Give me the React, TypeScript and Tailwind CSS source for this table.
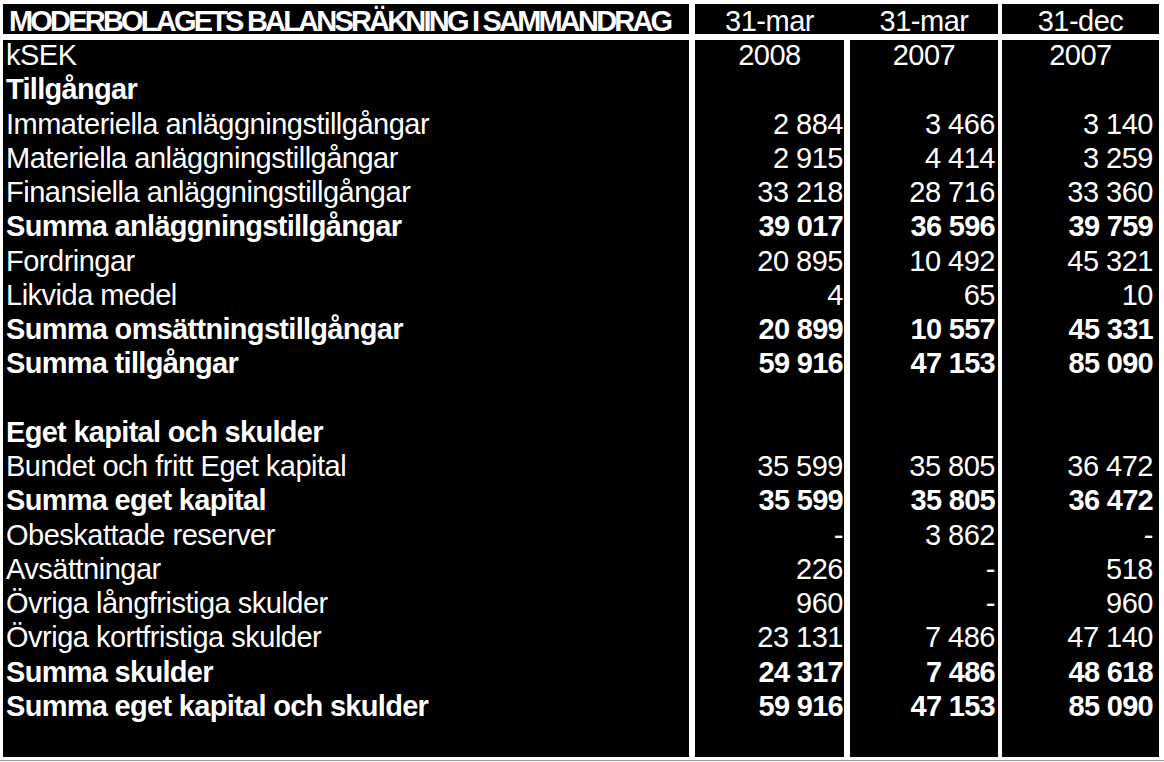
import React from 'react';

type Row = {
  label: string;
  bold?: boolean;
  values?: [string, string, string];
  center?: boolean;
};

const rows: Row[] = [
  { label: 'kSEK', values: ['2008', '2007', '2007'], center: true },
  { label: 'Tillgångar', bold: true },
  { label: 'Immateriella anläggningstillgångar', values: ['2 884', '3 466', '3 140'] },
  { label: 'Materiella anläggningstillgångar', values: ['2 915', '4 414', '3 259'] },
  { label: 'Finansiella anläggningstillgångar', values: ['33 218', '28 716', '33 360'] },
  { label: 'Summa anläggningstillgångar', bold: true, values: ['39 017', '36 596', '39 759'] },
  { label: 'Fordringar', values: ['20 895', '10 492', '45 321'] },
  { label: 'Likvida medel', values: ['4', '65', '10'] },
  { label: 'Summa omsättningstillgångar', bold: true, values: ['20 899', '10 557', '45 331'] },
  { label: 'Summa tillgångar', bold: true, values: ['59 916', '47 153', '85 090'] },
  { label: '' },
  { label: 'Eget kapital och skulder', bold: true },
  { label: 'Bundet och fritt Eget kapital', values: ['35 599', '35 805', '36 472'] },
  { label: 'Summa eget kapital', bold: true, values: ['35 599', '35 805', '36 472'] },
  { label: 'Obeskattade reserver', values: ['-', '3 862', '-'] },
  { label: 'Avsättningar', values: ['226', '-', '518'] },
  { label: 'Övriga långfristiga skulder', values: ['960', '-', '960'] },
  { label: 'Övriga kortfristiga skulder', values: ['23 131', '7 486', '47 140'] },
  { label: 'Summa skulder', bold: true, values: ['24 317', '7 486', '48 618'] },
  { label: 'Summa eget kapital och skulder', bold: true, values: ['59 916', '47 153', '85 090'] },
];

// right padding of each number column, as in the original sheet
const valuePad = ['pr-[1px]', 'pr-[3px]', 'pr-[6px]'];

function Cell({ text, bold, align, pad }: { text: string; bold?: boolean; align: 'left' | 'right' | 'center'; pad?: string }) {
  const alignCls = align === 'left' ? 'text-left' : align === 'right' ? 'text-right' : 'text-center';
  return (
    <div
      className={`h-[34.26px] leading-[34.26px] whitespace-nowrap ${alignCls} ${pad ?? ''} ${
        bold ? 'font-bold tracking-[-0.7px]' : 'font-normal tracking-[-0.5px]'
      }`}
    >
      {text || '\u00a0'}
    </div>
  );
}

export default function App() {
  return (
    <div
      className="w-[1164px] h-[762px] bg-white text-white text-[29px] overflow-hidden"
      style={{ fontFamily: '"Liberation Sans", Arial, sans-serif' }}
    >
      <div className="pt-[4px] pl-[3px]">
        <div className="grid grid-cols-[686px_6px_149px_6px_148px_4px_157px] grid-rows-[30px_717px] gap-y-[6px]">
          {/* header */}
          <div className="col-start-1 bg-black pl-[6px] pt-[2px] leading-[30px] font-bold tracking-[-2.8px] whitespace-nowrap">
            MODERBOLAGETS BALANSRÄKNING I SAMMANDRAG
          </div>
          <div className="col-start-3 col-span-3 bg-black grid grid-cols-[149px_6px_148px] pt-[2px] leading-[30px] tracking-[-0.5px]">
            <div className="col-start-1 text-center">31-mar</div>
            <div className="col-start-3 text-center">31-mar</div>
          </div>
          <div className="col-start-7 bg-black text-center pt-[2px] leading-[30px] tracking-[-0.5px]">31-dec</div>

          {/* body */}
          <div className="col-start-1 bg-black pl-[3px]">
            <div className="-mt-[2px]">
              {rows.map((r, i) => (
                <Cell key={i} text={r.label} bold={r.bold} align="left" />
              ))}
            </div>
          </div>
          {[0, 1, 2].map((c) => (
            <div key={c} className={`${c === 0 ? 'col-start-3' : c === 1 ? 'col-start-5' : 'col-start-7'} bg-black`}>
              <div className="-mt-[2px]">
                {rows.map((r, i) => (
                  <Cell
                    key={i}
                    text={r.values ? r.values[c] : ''}
                    bold={r.bold}
                    align={r.center ? 'center' : 'right'}
                    pad={r.center ? '' : valuePad[c]}
                  />
                ))}
              </div>
            </div>
          ))}
        </div>
        <div className="mt-[3px] -ml-[3px] h-px w-[1164px] bg-[#9a9a9a]" />
      </div>
    </div>
  );
}
